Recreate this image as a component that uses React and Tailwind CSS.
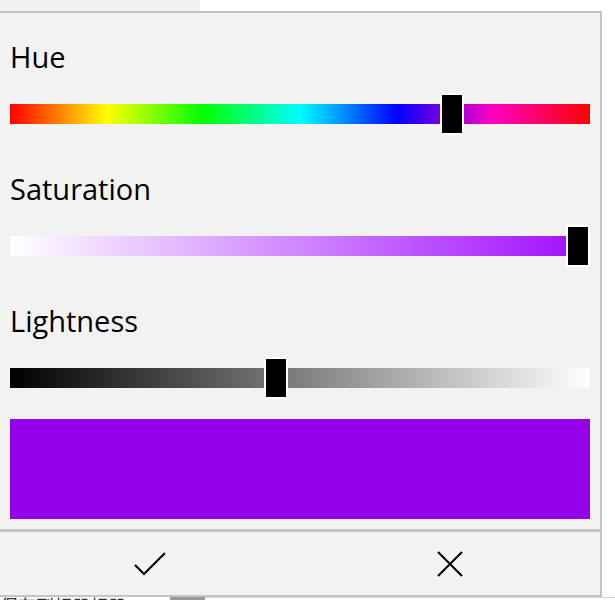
import { useState } from "react";

const TRACK = 580;
const THUMB = 24;

function Slider({ value, onChange, track }) {
  const left = Math.round(value * (TRACK - THUMB));

  const handle = (e) => {
    const box = e.currentTarget.getBoundingClientRect();
    const x = e.clientX - box.left - THUMB / 2;
    onChange(Math.min(1, Math.max(0, x / (TRACK - THUMB))));
  };

  return (
    <div
      className="relative h-[42px] w-[580px] flex items-center cursor-pointer"
      onMouseDown={handle}
    >
      <div className={`h-[20px] w-full ${track}`} />
      <div
        className="absolute top-0 h-[42px] w-[24px] border-2 border-white bg-black"
        style={{ left }}
      />
    </div>
  );
}

function Section({ label, children }) {
  return (
    <div className="flex flex-col">
      <div className="text-[29px] leading-[36px] text-black h-[36px]">{label}</div>
      <div className="mt-[18px]">{children}</div>
    </div>
  );
}

export default function App() {
  const [hue, setHue] = useState(430 / 556);
  const [sat, setSat] = useState(1);
  const [light, setLight] = useState(254 / 556);

  const h = Math.round(hue * 360);
  const color = `hsl(${h}, ${Math.round(sat * 100)}%, ${(light * 100).toFixed(1)}%)`;

  return (
    <div
      className="w-[615px] h-[602px] bg-white overflow-hidden flex flex-col"
      style={{ fontFamily: '"Open Sans", "Noto Sans", "Noto Sans CJK SC", sans-serif' }}
    >
      {/* strip above the popup */}
      <div className="h-[11px] flex shrink-0">
        <div className="w-[200px] bg-[#f0f0f0]" />
      </div>

      {/* picker popup */}
      <div className="w-[602px] shrink-0 bg-[#f2f2f2] border-t-2 border-r-2 border-b-2 border-[#c4c4c4] flex flex-col">
        <div className="px-[10px] pt-[26px] pb-[10px] flex flex-col gap-[36px]">
          <Section label="Hue">
            <Slider
              value={hue}
              onChange={setHue}
              track="bg-[linear-gradient(to_right,#ff0000_0%,#ffff00_16.7%,#00ff00_33.3%,#00ffff_50%,#0000ff_66.7%,#ff00c0_83.3%,#ff0000_100%)]"
            />
          </Section>
          <Section label="Saturation">
            <Slider
              value={sat}
              onChange={setSat}
              track="bg-[linear-gradient(to_right,#ffffff,#a00cff)]"
            />
          </Section>
          <div className="flex flex-col">
            <Section label="Lightness">
              <Slider
                value={light}
                onChange={setLight}
                track="bg-[linear-gradient(to_right,#000000,#ffffff)]"
              />
            </Section>
            <div className="mt-[20px] h-[100px] w-[580px]" style={{ background: color }} />
          </div>
        </div>

        <div className="border-t-[3px] border-[#c4c4c4] h-[66px] flex">
          <button className="flex-1 flex items-center justify-center">
            <svg width="32" height="24" viewBox="0 0 32 24" fill="none">
              <path d="M1 13 L10 22 L31 1" stroke="#000" strokeWidth="2" />
            </svg>
          </button>
          <button className="flex-1 flex items-center justify-center">
            <svg width="26" height="26" viewBox="0 0 26 26" fill="none">
              <path d="M1 1 L25 25 M25 1 L1 25" stroke="#000" strokeWidth="2" />
            </svg>
          </button>
        </div>
      </div>

      {/* page content behind the popup, only its top edge shows */}
      <div className="h-[3px] overflow-hidden flex">
        <div className="w-[170px] overflow-hidden">
          <div className="mt-[-2px] text-[18px] leading-[22px] text-[#333] whitespace-nowrap">
            保存到相册相册
          </div>
        </div>
        <div className="w-[35px] bg-[#9a9a9a]" />
        <div className="flex-1 border-t border-[#d0d0d0]" />
      </div>
    </div>
  );
}
